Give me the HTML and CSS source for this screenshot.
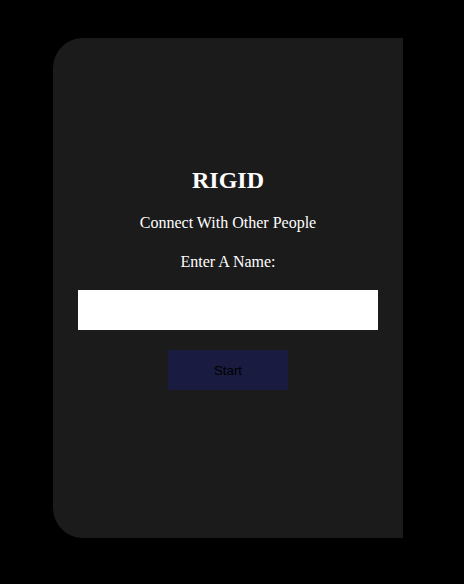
FILE: index.html
```html
<!DOCTYPE html>
<html>
<head>
<meta charset="utf-8">
<link rel="stylesheet" href="styles.css">
</head>
<body>
<div class="page">
  <div class="card">
    <h2 class="title">RIGID</h2>
    <p class="subtitle">Connect With Other People</p>
    <p class="label">Enter A Name:</p>
    <input class="name-input" type="text">
    <button class="start-btn">Start</button>
  </div>
</div>
</body>
</html>
```
FILE: styles.css
```css
html, body {
  margin: 0;
  padding: 0;
  background: #000;
}
.page {
  width: 464px;
  height: 584px;
  padding-top: 38px;
  padding-left: 53px;
  box-sizing: border-box;
}
.card {
  width: 350px;
  height: 500px;
  background: #1b1b1b;
  border-radius: 30px 0 0 30px;
  display: flex;
  flex-direction: column;
  align-items: center;
  padding-top: 128px;
  box-sizing: border-box;
  font-family: "Liberation Serif", "Times New Roman", serif;
  color: #fff;
}
.title {
  margin: 0;
  font-size: 24px;
  line-height: 28px;
  font-weight: bold;
}
.subtitle {
  margin: 20px 0 0;
  font-size: 16px;
  line-height: 18px;
}
.label {
  margin: 21px 0 0;
  font-size: 16px;
  line-height: 18px;
}
.name-input {
  margin-top: 19px;
  width: 300px;
  height: 40px;
  border: none;
  background: #fff;
  padding: 0;
  box-sizing: border-box;
  outline: none;
}
.start-btn {
  margin-top: 20px;
  width: 120px;
  height: 40px;
  border: none;
  background: #191b41;
  color: #000;
  font-family: "Liberation Sans", Arial, sans-serif;
  font-size: 13.333px;
  padding: 0;
}
```
